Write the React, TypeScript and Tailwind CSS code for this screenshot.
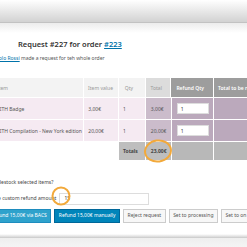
const font = "font-['Noto_Sans',sans-serif]";

const rows = [
  { name: "YITH Badge", value: "3,00€", qty: "1", total: "3,00€" },
  { name: "YITH Compilation - New York edition", value: "20,00€", qty: "1", total: "20,00€" },
];

const App = () => {
  return (
    <div className={`relative w-[247px] h-[247px] overflow-hidden bg-white ${font}`}>
      {/* top admin bar shadow */}
      <div className="h-[23px] bg-gradient-to-b from-white to-[#d2d2d2] border-b border-[#c2c2c2]" />
      <div className="h-[10px] bg-gradient-to-b from-[#ececec] to-white" />

      <h1 className="mt-[5px] ml-[18px] h-[12px] text-[7.5px] leading-[12px] font-semibold text-[#333]">
        Request #227 for order <span className="text-[#0073aa] underline">#223</span>
      </h1>
      <p className="mt-[5px] -ml-[7px] h-[6px] text-[5px] leading-[6px] text-[#555] whitespace-nowrap">
        <span className="text-[#0073aa] underline">Paolo Rossi</span> made a request for teh whole order
      </p>

      {/* items table */}
      <div className="mt-[17px] -ml-[6px] w-[260px] flex flex-col gap-px bg-white text-[5px] leading-[6px] whitespace-nowrap">
        <div className="flex gap-px h-[19px] text-[#999]">
          <div className="w-[90px] pl-[3px] flex items-center bg-[#f3f3f3]">Item</div>
          <div className="w-[34px] pl-[4px] flex items-center bg-[#f3f3f3]">Item value</div>
          <div className="w-[26px] pl-[6px] flex items-center bg-[#f3f3f3]">Qty</div>
          <div className="w-[25px] pl-[5px] flex items-center bg-[#dcdcdc]">Total</div>
          <div className="w-[42px] pl-[5px] flex items-center bg-[#9d9d9d] text-white font-semibold">Refund Qty</div>
          <div className="w-[40px] pl-[4px] flex items-center bg-[#9d9d9d] text-white font-semibold">Total to be refunded</div>
        </div>
        {rows.map((r) => (
          <div key={r.name} className="flex gap-px h-[21px] text-[#555]">
            <div className="w-[90px] pl-[3px] flex items-center bg-[#f5eaf2]">{r.name}</div>
            <div className="w-[34px] pl-[4px] flex items-center bg-[#f5eaf2]">{r.value}</div>
            <div className="w-[26px] pl-[4px] flex items-center bg-[#f5eaf2]">{r.qty}</div>
            <div className="w-[25px] pl-[5px] flex items-center bg-[#cbbccb]">{r.total}</div>
            <div className="w-[42px] pl-[5px] flex items-center bg-[#bba9bc]">
              <div className="w-[32px] h-[11px] pl-[3px] flex items-center bg-white border border-[#ddd] text-[#333]">1</div>
            </div>
            <div className="w-[40px] bg-[#bba9bc]" />
          </div>
        ))}
        <div className="flex gap-px h-[18px] text-[#444] font-bold">
          <div className="w-[90px]" />
          <div className="w-[34px]" />
          <div className="w-[26px] pl-[4px] flex items-center bg-[#bebebe]">Totals</div>
          <div className="w-[25px] pl-[5px] flex items-center bg-[#bebebe]">23,00€</div>
          <div className="w-[42px] bg-[#b8b8b8]" />
          <div className="w-[40px] bg-[#b8b8b8]" />
        </div>
      </div>

      <p className="mt-[19px] -ml-[2px] h-[6px] text-[5px] leading-[6px] text-[#444] whitespace-nowrap">
        Restock selected items?
      </p>

      <div className="mt-[8px] -ml-[8px] flex items-center gap-[3px] h-[12px] text-[5px] whitespace-nowrap">
        <span className="text-[#444]">Use custom refund amount</span>
        <div className="w-[90px] h-[12px] pl-[4px] flex items-center bg-white border border-[#ddd] text-[#333]">15</div>
      </div>

      {/* action buttons */}
      <div className="mt-[4px] -ml-[13px] flex gap-[3px] h-[14px] text-[5px] whitespace-nowrap">
        <div className="px-[3.5px] flex items-center bg-[#2ea2cc] border border-[#1e8cbe] text-white">Refund 15,00€ via BACS</div>
        <div className="px-[3.5px] flex items-center bg-[#0085ba] border border-[#006799] text-white">Refund 15,00€ manually</div>
        <div className="px-[3.5px] flex items-center bg-[#f7f7f7] border border-[#ccc] text-[#555]">Reject request</div>
        <div className="px-[3.5px] flex items-center bg-[#f7f7f7] border border-[#ccc] text-[#555]">Set to processing</div>
        <div className="px-[3.5px] flex items-center bg-[#f7f7f7] border border-[#ccc] text-[#555]">Set to on hold</div>
      </div>

      <div className="mt-[11px] h-[4px] bg-gradient-to-b from-white to-[#d8d8d8] border-b border-[#cfcfcf]" />
      <div className="h-[12px] bg-gradient-to-b from-[#eeeeee] to-[#f6f6f6]" />

      {/* hand-drawn highlight circles */}
      <svg className="absolute left-0 top-0 pointer-events-none" width="247" height="247">
        <ellipse cx="158" cy="151" rx="13" ry="10.5" fill="none" stroke="#f2a93b" strokeWidth="2" transform="rotate(-8 158 151)" />
        <circle cx="61" cy="196" r="8.5" fill="none" stroke="#f2a93b" strokeWidth="2" />
      </svg>
    </div>
  );
};

export default App;
